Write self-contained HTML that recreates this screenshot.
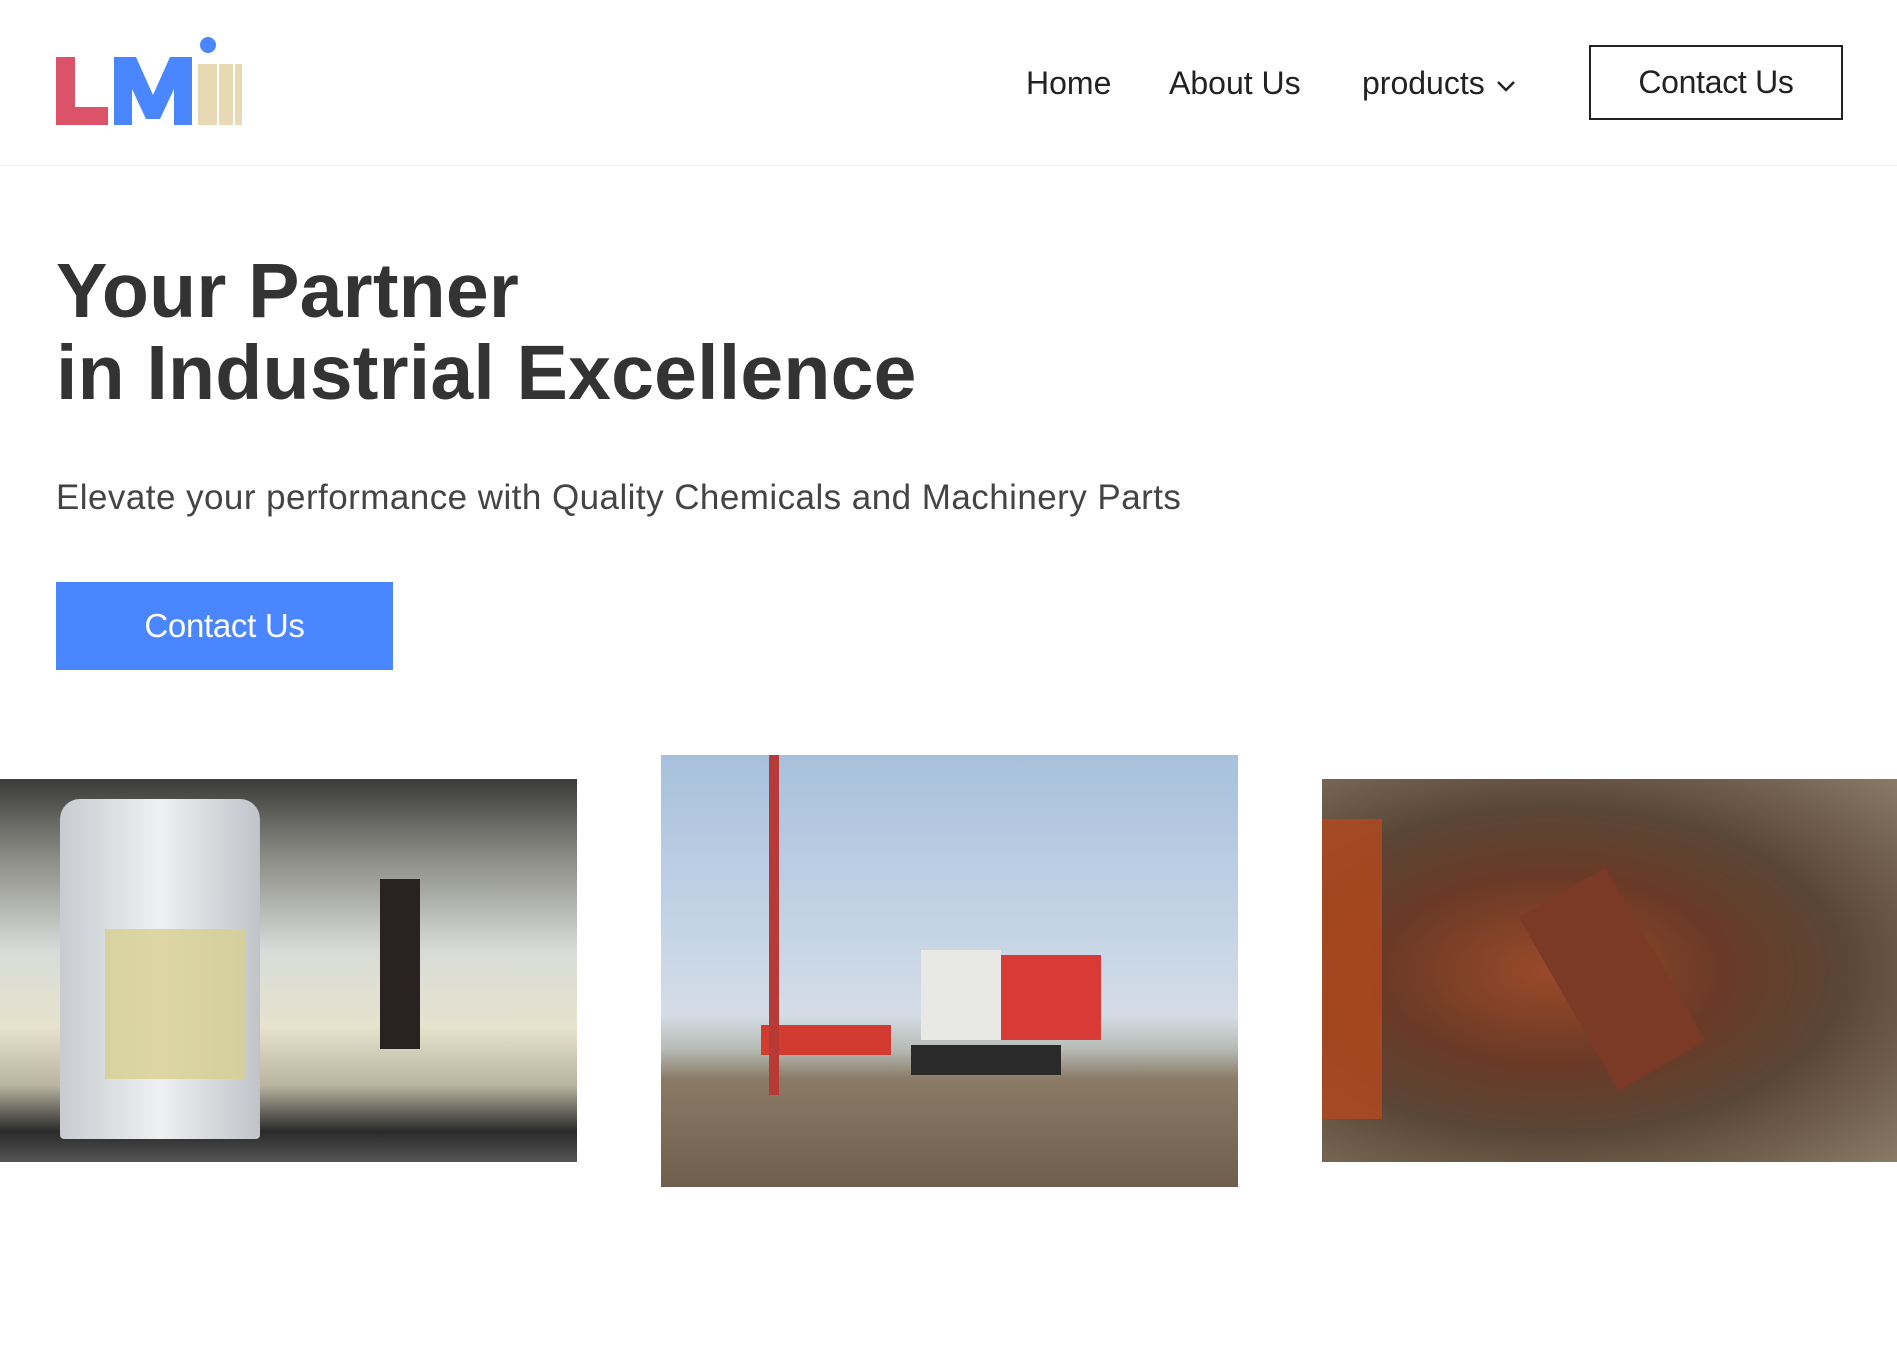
<!DOCTYPE html>
<html><head><meta charset="utf-8"><style>
*{margin:0;padding:0;box-sizing:border-box}
body{width:1897px;height:1349px;background:#fff;font-family:"Liberation Sans",sans-serif;color:#333;position:relative;overflow:hidden}
.hdr{position:absolute;left:0;top:0;width:1897px;height:166px;border-bottom:1px solid #ececec}
.nav{position:absolute;top:65px;font-size:32px;color:#222;letter-spacing:0}
.btn1{position:absolute;left:1589px;top:45px;width:254px;height:75px;border:2px solid #222;font-size:32px;color:#222;text-align:center;line-height:71px;letter-spacing:-0.3px}
h1{position:absolute;left:56px;top:250px;font-size:77px;line-height:82px;font-weight:bold;color:#333;letter-spacing:0.2px}
.sub{position:absolute;left:56px;top:478px;font-size:35px;color:#444;letter-spacing:0.45px}
.btn2{position:absolute;left:56px;top:582px;width:337px;height:88px;background:#4a86ff;color:#fff;font-size:33px;text-align:center;line-height:88px;letter-spacing:-0.3px}
.img{position:absolute}
</style></head><body>
<div class="hdr">
<svg style="position:absolute;left:56px;top:37px" width="190" height="90" viewBox="56 37 190 90">
<path d="M56 57h19v50h33v18H56z" fill="#db5269"/>
<path d="M114 57h22l17 38 17-38h22v68h-18v-36l-14 30h-14l-14-30v36h-18z" fill="#4a86ff"/>
<rect x="198" y="64" width="19" height="61" fill="#e6d9b3"/>
<rect x="219" y="64" width="14" height="61" fill="#e6d9b3"/>
<rect x="235" y="64" width="7" height="61" fill="#e6d9b3"/>
<circle cx="208" cy="45" r="8" fill="#4a86ff"/>
</svg>
<div class="nav" style="left:1026px">Home</div>
<div class="nav" style="left:1169px">About Us</div>
<div class="nav" style="left:1362px">products&nbsp;<svg width="24" height="16" viewBox="0 0 24 16" style="vertical-align:middle"><path d="M4 4l8 8 8-8" stroke="#222" stroke-width="2.5" fill="none"/></svg></div>
<div class="btn1">Contact Us</div>
</div>
<h1>Your Partner<br>in Industrial Excellence</h1>
<div class="sub">Elevate your performance with Quality Chemicals and Machinery Parts</div>
<div class="btn2">Contact Us</div>
<div class="img" style="left:0;top:779px;width:577px;height:383px;background:linear-gradient(180deg,#3a3a3a 0%,#8a8a84 20%,#d8dcd8 45%,#e6e2cc 65%,#b8b4a0 80%,#2a2a2a 92%,#555 100%)">
<div style="position:absolute;left:60px;top:20px;width:200px;height:340px;background:linear-gradient(90deg,#c8ccd0,#eef0f2,#c0c4c8);border-radius:20px 20px 4px 4px"></div>
<div style="position:absolute;left:105px;top:150px;width:140px;height:150px;background:#d8d090;opacity:.8"></div>
<div style="position:absolute;left:380px;top:100px;width:40px;height:170px;background:#2a2220"></div>
</div>
<div class="img" style="left:661px;top:755px;width:577px;height:432px;background:linear-gradient(180deg,#a8c0dc 0%,#c4d4e6 40%,#d4dce6 60%,#b8bcb6 68%,#8a7a66 75%,#6e5e4c 100%)">
<div style="position:absolute;left:100px;top:270px;width:130px;height:30px;background:#d33a30"></div>
<div style="position:absolute;left:260px;top:195px;width:80px;height:90px;background:#e8e8e4"></div>
<div style="position:absolute;left:340px;top:200px;width:100px;height:85px;background:#d83a36"></div>
<div style="position:absolute;left:250px;top:290px;width:150px;height:30px;background:#2a2a2a"></div>
<div style="position:absolute;left:108px;top:0;width:10px;height:340px;background:#b83a36"></div>
</div>
<div class="img" style="left:1322px;top:779px;width:575px;height:383px;background:radial-gradient(ellipse at 40% 50%,#9a4a2a 0%,#6a3a26 35%,#5a4636 60%,#8a7a66 100%)">
<div style="position:absolute;left:0;top:40px;width:60px;height:300px;background:#b4481e;opacity:.8"></div>
<div style="position:absolute;left:240px;top:100px;width:100px;height:200px;background:#7a3a26;transform:rotate(-30deg)"></div>
</div>
</body></html>
